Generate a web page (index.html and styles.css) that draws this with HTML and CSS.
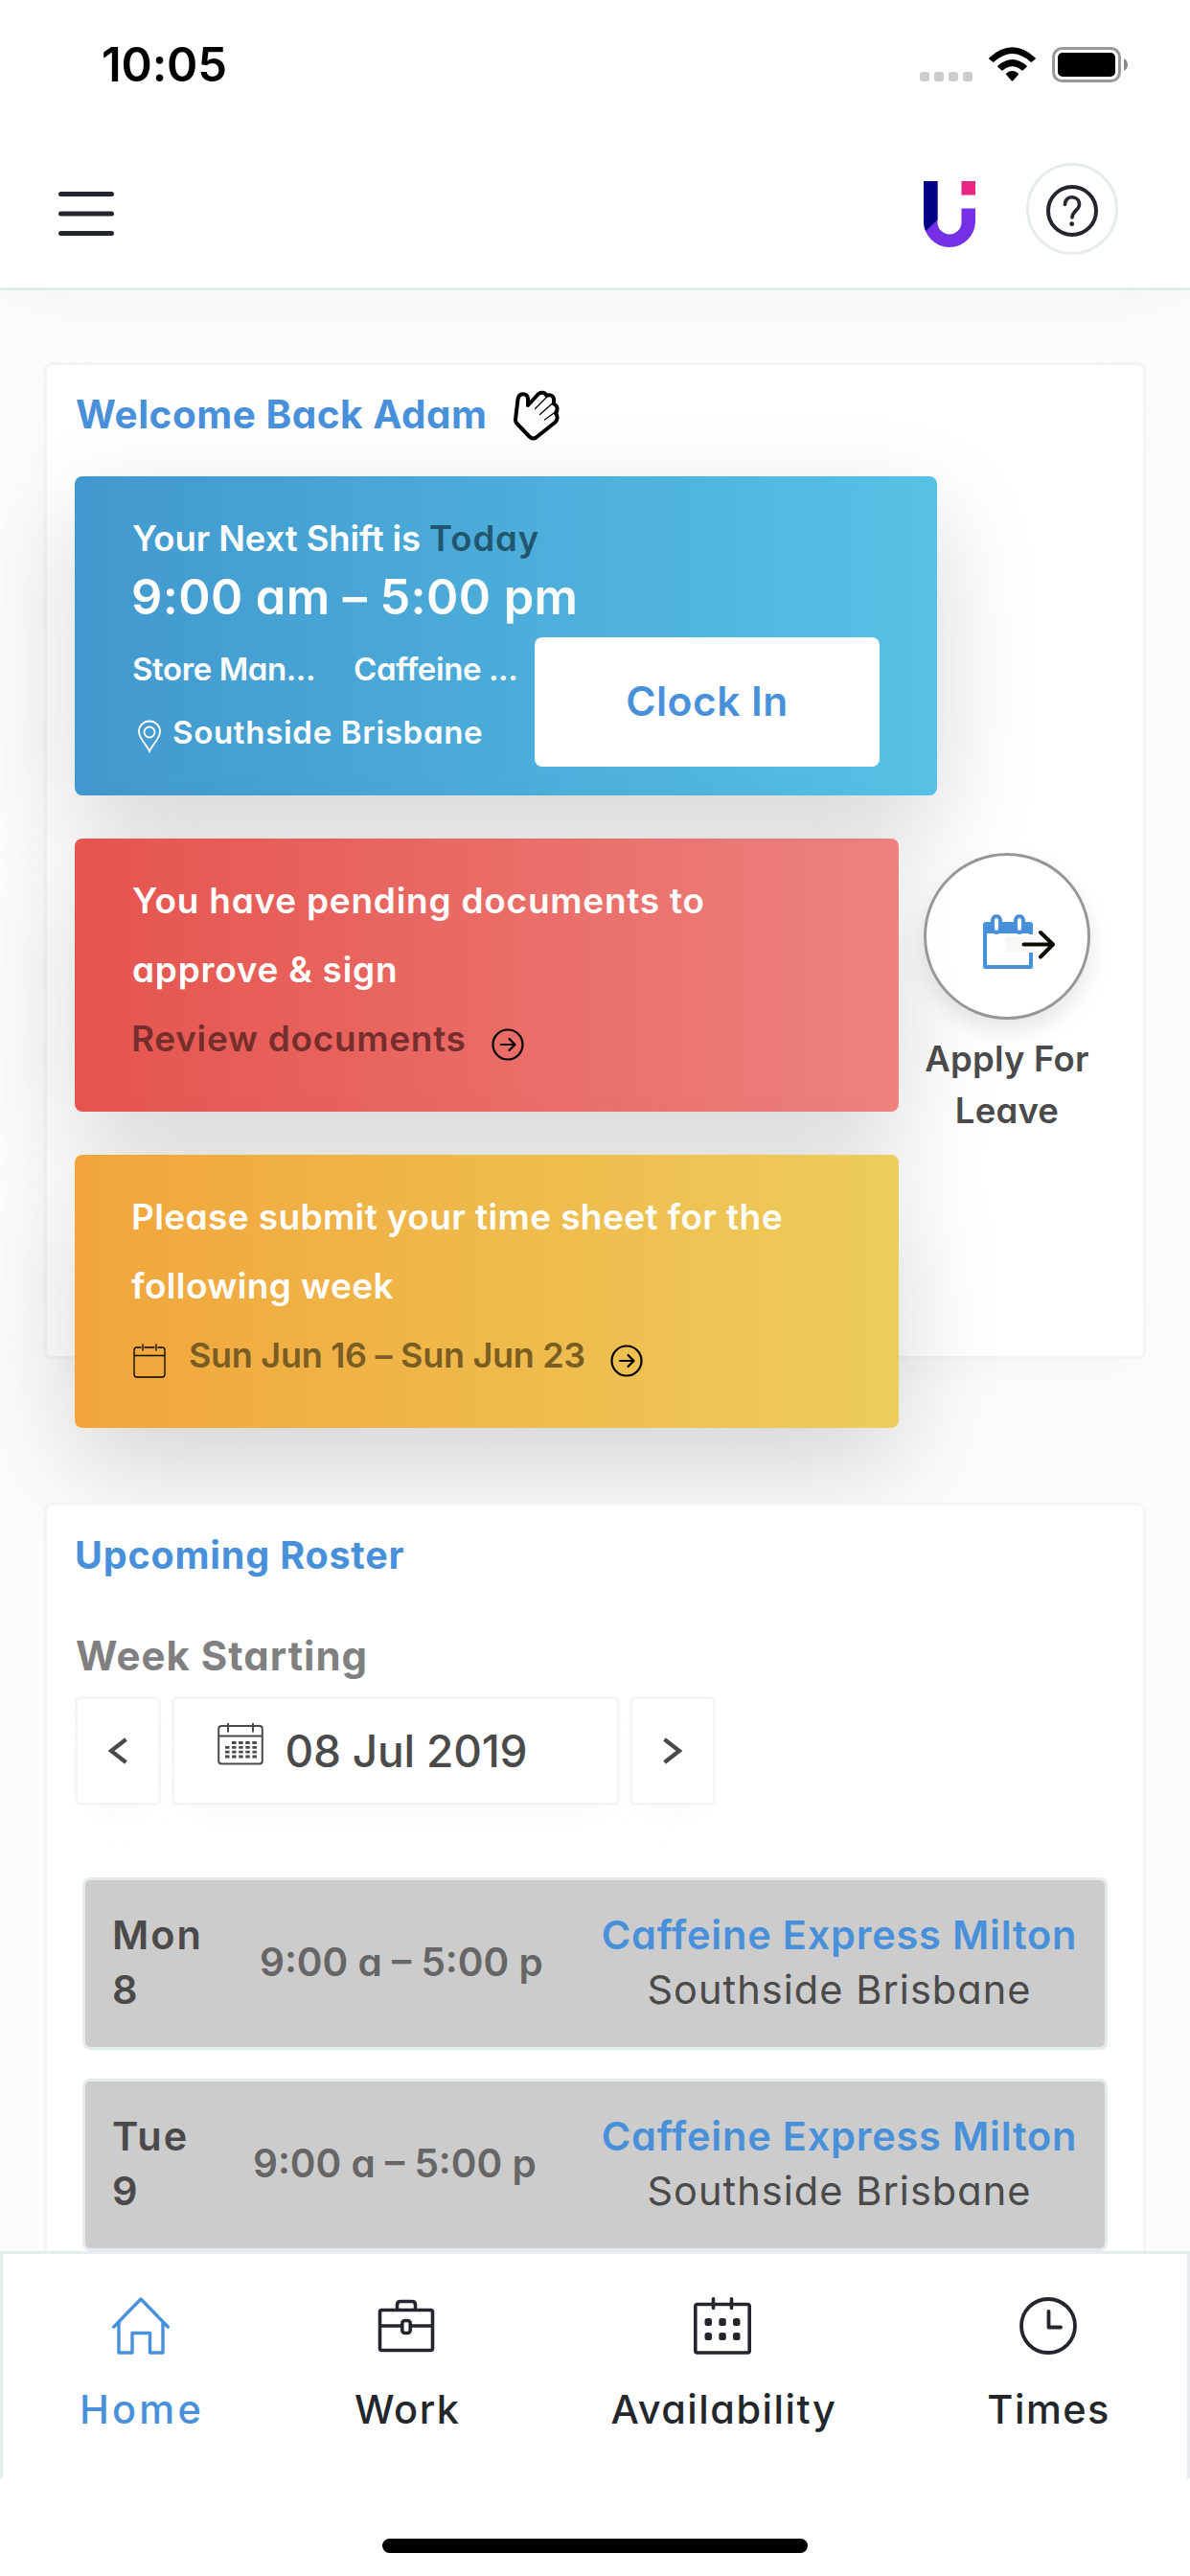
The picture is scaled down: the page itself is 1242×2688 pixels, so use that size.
FILE: index.html
```html
<!DOCTYPE html>
<html lang="en">
<head>
<meta charset="utf-8">
<title>Home</title>
<link rel="stylesheet" href="styles.css">
</head>
<body>
<div class="screen">
  <header class="header">
    <div class="status">
      <span class="status-time">10:05</span>
      <svg class="status-icons" width="218" height="40" viewBox="0 0 218 40">
        <g fill="#ccc"><rect x="0" y="27" width="10" height="10" rx="3"/><rect x="15" y="27" width="10" height="10" rx="3"/><rect x="30" y="27" width="10" height="10" rx="3"/><rect x="45" y="27" width="10" height="10" rx="3"/></g>
        <path d="M72.500 12.200Q96.500 -9.500 120.500 12.200Q121.300 13 120.500 13.800L117 16.600Q116.300 17.200 115.500 16.500Q96.500 -.5 77.500 16.500Q76.700 17.200 76 16.600L72.500 13.800Q71.700 13 72.500 12.200ZM81.500 20.500Q96.500 7.500 111.500 20.500Q112.300 21.300 111.500 22L107.800 25.300Q107 26 106.300 25.300Q96.500 17.200 86.700 25.300Q86 26 85.200 25.300L81.500 22Q80.700 21.300 81.500 20.500ZM90.300 28.500Q96.500 23.600 102.700 28.500Q103.500 29.300 102.700 30.100L97.300 36.200Q96.500 37 95.700 36.200L90.300 30.100Q89.500 29.300 90.300 28.500Z" fill="#000"/>
        <rect x="139.500" y="2.500" width="69" height="34" rx="9" fill="none" stroke="#999" stroke-width="3"/>
        <rect x="144" y="7" width="60" height="25" rx="5" fill="#000"/>
        <path d="M213 13Q217 15.500 217 19.500T213 26Z" fill="#888"/>
      </svg>
    </div>
    <div class="toolbar">
      <svg width="58" height="46" viewBox="0 0 58 46" stroke="#23272c" stroke-width="5" stroke-linecap="round"><path d="M2.500 2.500h53M2.500 23h53M2.500 43.500h53"/></svg>
      <div class="toolbar-right">
        <svg width="54" height="70" viewBox="0 0 54 70">
          <path d="M0 0H14.500V43A12.500 12.500 0 0 0 39.500 43V28.500H54V42A27 27 0 0 1 0 42Z" fill="#7530e6"/>
          <path d="M0 0H14.500V40.500L2.200 52Q0 48 0 42Z" fill="#040086"/>
          <rect x="39.500" width="14.500" height="14.500" fill="#e82582"/>
        </svg>
        <div class="help">
          <svg width="54" height="54" viewBox="0 0 54 54" fill="none" stroke="#23272c" stroke-width="4" stroke-linecap="round"><circle cx="27" cy="27" r="25"/><path d="M19.500 20.500C19.500 10 34.500 10.500 34.500 20.500C34.500 26 27 27.500 27 34" stroke-width="3.600"/><circle cx="26.700" cy="40.700" r="2.400" fill="#23272c" stroke="none"/></svg>
        </div>
      </div>
    </div>
  </header>

  <main class="content">
    <section class="panel panel-welcome">
      <h1 class="title title-welcome">Welcome Back Adam
        <svg width="48" height="53" viewBox="0 0 48 53" fill="none" stroke="#000" stroke-linecap="round" stroke-linejoin="round"><path d="M2 31L4.500 9.500C5.500 2.500 14.500 2.500 15 9V16L25.500 4.500C28.500 1.500 33 2.500 34.500 6C38 4 42.500 6 42 11V14.500C46 16 46.500 20.500 44 24V24.500C46.500 27 46 31.500 43 34L23.500 49.500Q20 52 16.500 48.500L3.500 35Q2 33.500 2 31Z" stroke-width="4"/><path d="M15 14.500L13.500 17L18 13Z" fill="#000" stroke="none"/><path d="M34 8L22.500 19.500M41.500 13L27.500 25.500M43.500 23L32.500 31" stroke-width="1.300"/></svg>
      </h1>

      <article class="card card-shift">
        <p class="shift-lead">Your Next Shift is <span class="shift-day">Today</span></p>
        <p class="shift-hours">9:00 am – 5:00 pm</p>
        <div class="shift-row">
          <div class="shift-info">
            <p class="shift-roles"><span class="role">Store Man...</span><span class="site">Caffeine ...</span></p>
            <p class="shift-place"><svg width="26" height="35" viewBox="0 0 26 35" fill="none" stroke="#fff" stroke-width="1.800"><path d="M13 33C11 27 2 20 2 12.500A11 11 0 0 1 24 12.500C24 20 15 27 13 33Z"/><circle cx="13" cy="13" r="5.500"/></svg><span>Southside Brisbane</span></p>
          </div>
          <button class="clock-in">Clock In</button>
        </div>
      </article>

      <div class="tasks">
        <div class="task-list">
          <article class="card card-task card-documents">
            <p class="task-text documents-text">You have pending documents to approve &amp; sign</p>
            <p class="task-link"><span class="documents-link">Review documents</span>
              <svg width="34" height="34" viewBox="0 0 34 34" fill="none" stroke="#000" stroke-width="2.200" stroke-linecap="round" stroke-linejoin="round"><circle cx="17" cy="17" r="15.500"/><path d="M10 17h14M18.500 11l6 6-6 6"/></svg></p>
          </article>
          <article class="card card-task card-timesheet">
            <p class="task-text timesheet-text">Please submit your time sheet for the following week</p>
            <p class="task-link">
              <svg class="task-calendar" width="34" height="36" viewBox="0 0 34 36" fill="none" stroke="#000" stroke-width="1.300" stroke-linecap="round"><path d="M8 4H4Q1 4 1 7V32Q1 35 4 35H30Q33 35 33 32V7Q33 4 30 4H26M12 4H22M1 12.500H33M10 1V7M24 1V7"/></svg>
              <span class="timesheet-link">Sun Jun 16 – Sun Jun 23</span>
              <svg width="34" height="34" viewBox="0 0 34 34" fill="none" stroke="#000" stroke-width="2.200" stroke-linecap="round" stroke-linejoin="round"><circle cx="17" cy="17" r="15.500"/><path d="M10 17h14M18.500 11l6 6-6 6"/></svg></p>
          </article>
        </div>
        <a class="leave">
          <span class="leave-circle">
            <svg width="76" height="60" viewBox="0 0 76 60"><path d="M2 53V13H50V22M50 41V56H2V50" fill="none" stroke="#4990db" stroke-width="4" stroke-linejoin="round"/><path d="M0 21V12Q0 9 3 9H49Q52 9 52 12V21Z" fill="#4990db"/><g fill="#fff" stroke="#4990db" stroke-width="4"><rect x="10" y="3" width="8" height="17" rx="4"/><rect x="34" y="3" width="8" height="17" rx="4"/></g><path d="M6 18H22V21H6ZM30 18H46V21H30Z" fill="#4990db"/><path d="M23 24H53V41H23Z" fill="#f8f8f8"/><path d="M42.500 32.500H73M60 20L73 32.500L60 45.500" fill="none" stroke="#0d0c04" stroke-width="4" stroke-linecap="round" stroke-linejoin="round"/></svg>
          </span>
          <span class="leave-label">Apply For Leave</span>
        </a>
      </div>
    </section>

    <section class="panel panel-roster">
      <h2 class="title title-roster">Upcoming Roster</h2>
      <h3 class="week-label">Week Starting</h3>
      <div class="week-picker">
        <button class="box step"><svg width="22" height="28" viewBox="0 0 22 28" fill="none" stroke="#4a4a4a" stroke-width="4.200"><path d="M19.500 2L4 14L19.500 26"/></svg></button>
        <div class="box date">
          <svg width="48" height="44" viewBox="0 0 48 44" fill="none" stroke="#4a4a4a" stroke-width="2"><rect x="1.200" y="3" width="45.600" height="39.500" rx="3"/><path d="M1 13.500H47M11 0V9.500M37 0V9.500"/><path d="M15 20.500H41M8 25.300H41M8 30.200H41M8 35H41" stroke-width="2.800" stroke-dasharray="4.500 2.600"/></svg>
          <span>08 Jul 2019</span>
        </div>
        <button class="box step"><svg width="22" height="28" viewBox="0 0 22 28" fill="none" stroke="#4a4a4a" stroke-width="4.200"><path d="M2.500 2L18 14L2.500 26"/></svg></button>
      </div>
      <div class="shifts">
        <article class="shift">
          <div class="day day-mon">Mon<br>8</div>
          <div class="hours">9:00 a – 5:00 p</div>
          <div class="venue"><strong>Caffeine Express Milton</strong><span>Southside Brisbane</span></div>
        </article>
        <article class="shift">
          <div class="day day-tue">Tue<br>9</div>
          <div class="hours">9:00 a – 5:00 p</div>
          <div class="venue"><strong>Caffeine Express Milton</strong><span>Southside Brisbane</span></div>
        </article>
      </div>
    </section>
  </main>

  <footer class="footer">
    <nav class="tabs">
      <a class="tab tab-home">
        <svg width="60" height="60" viewBox="0 0 60 60" fill="none" stroke="#4990db" stroke-width="3.400" stroke-linecap="round" stroke-linejoin="round"><path d="M1.800 31L30 2L58.200 31M7 26V58H21V37.500H39.500V58H53V26"/></svg>
        <span>Home</span></a>
      <a class="tab tab-work">
        <svg width="60" height="60" viewBox="0 0 60 60" fill="none" stroke="#23272c" stroke-width="3.600" stroke-linejoin="round"><rect x="2.500" y="13.500" width="55" height="42" rx="2"/><path d="M20.500 13V8Q20.500 4.500 24 4.500H36Q39.500 4.500 39.500 8V13M2.500 30H25.500M34.500 30H57.500"/><rect x="25.800" y="24.500" width="8.400" height="13" rx="3"/></svg>
        <span>Work</span></a>
      <a class="tab tab-availability">
        <svg width="60" height="60" viewBox="0 0 60 60" fill="none" stroke="#23272c" stroke-width="3.600" stroke-linecap="round"><rect x="1.800" y="7.500" width="56.400" height="50.500" rx="2"/><path d="M20.500 1.800V11.500M39.500 1.800V11.500"/><g fill="#23272c" stroke="none"><rect x="11.500" y="22" width="7.500" height="8" rx="2.500"/><rect x="26.300" y="22" width="7.500" height="8" rx="2.500"/><rect x="41" y="22" width="7.500" height="8" rx="2.500"/><rect x="11.500" y="37" width="7.500" height="8" rx="2.500"/><rect x="26.300" y="37" width="7.500" height="8" rx="2.500"/><rect x="41" y="37" width="7.500" height="8" rx="2.500"/></g></svg>
        <span>Availability</span></a>
      <a class="tab tab-times">
        <svg width="60" height="60" viewBox="0 0 60 60" fill="none" stroke="#23272c" stroke-width="3.800" stroke-linecap="round" stroke-linejoin="round"><circle cx="30" cy="30" r="28"/><path d="M30.500 15V31.500H43"/></svg>
        <span>Times</span></a>
    </nav>
    <div class="home-indicator"></div>
  </footer>
</div>
</body>
</html>
```
FILE: styles.css
```css
* { box-sizing: border-box; margin: 0; padding: 0; }
body { background: #fcfcfc; font-family: Inter, "Open Sans", sans-serif; font-feature-settings: "cv11"; color: #4a4a4a; }
svg { display: block; flex: none; }
button { font: inherit; color: inherit; border: 0; }

.screen { width: 1242px; height: 2688px; display: flex; flex-direction: column; overflow: hidden; }

.header { flex: none; height: 303px; position: relative; background: #fff; border-bottom: 3px solid #e4ebed; box-shadow: 0 18px 50px -12px rgba(205, 228, 220, .25); }
.status { display: flex; justify-content: space-between; padding: 38px 64px 0 106px; height: 136px; }
.status-time { font-size: 49px; line-height: 60px; font-weight: 600; letter-spacing: -.2px; color: #000; }
.status-icons { margin-top: 10px; }
.toolbar { display: flex; justify-content: space-between; align-items: center; height: 164px; padding: 0 75px 0 61px; }
.toolbar > svg { margin-top: 9px; }
.toolbar-right { display: flex; align-items: center; gap: 53px; }
.toolbar-right > svg { margin-top: 12px; }
.help { width: 96px; height: 96px; border: 3px solid #e6ecee; border-radius: 50%; display: flex; align-items: center; justify-content: center; padding-top: 4px; }

.content { flex: 1; min-height: 0; overflow: hidden; padding: 75px 46px 0; }
.panel { border: 3px solid #f3f4f4; border-radius: 8px; background: #fff; padding: 25px 29px 0; width: 1150px; }
.panel-welcome { height: 1040px; box-shadow: 0 20px 50px -20px rgba(205, 228, 220, .35); }
.title { display: flex; align-items: center; line-height: 54px; font-weight: 700; color: #4990db; white-space: nowrap; }
.title-welcome { padding-left: 1px; font-size: 40.500px; letter-spacing: .5px; gap: 27px; margin-bottom: 37px; }
.title-roster { font-size: 39.500px; letter-spacing: .8px; }

.card { border-radius: 8px; padding-left: 61px; box-shadow: 0 40px 110px rgba(0, 0, 0, .16); color: #fff; font-weight: 600; white-space: nowrap; }
.card-shift { width: 900px; height: 333px; padding-top: 38px; background: linear-gradient(90deg, #4298ce, #56c1e5); }
.shift-lead { margin-left: -1px; font-size: 36.500px; line-height: 54px; letter-spacing: -.1px; }
.shift-day { color: #22566f; letter-spacing: .9px; }
.shift-hours { margin: 4px 0 12px -2px; font-size: 50.500px; line-height: 60px; letter-spacing: .4px; }
.shift-row { display: flex; }
.shift-info { width: 419px; padding-top: 9px; font-size: 33px; line-height: 48px; }
.shift-roles { display: flex; margin-bottom: 18px; }
.role { width: 231px; letter-spacing: -.4px; margin-left: -1px; }
.site { letter-spacing: -.4px; }
.shift-place { display: flex; align-items: center; gap: 11px; padding-left: 4px; letter-spacing: .7px; }
.shift-place svg { margin-top: 9px; }
.clock-in { width: 360px; height: 135px; padding-bottom: 2px; border-radius: 8px; background: #fff; color: #4990db; font-size: 42.500px; font-weight: 600; letter-spacing: .5px; }

.tasks { display: flex; margin-top: 45px; }
.task-list { display: flex; flex-direction: column; gap: 45px; }
.card-task { width: 860px; height: 285px; padding-top: 29px; font-size: 37px; line-height: 72px; }
.card-documents { background: linear-gradient(90deg, #e6544e, #ed827e); }
.card-timesheet { background: linear-gradient(90deg, #f1a53c, #edcd5b); }
.task-text { width: 710px; white-space: normal; }
.documents-text { margin-left: -1px; letter-spacing: .75px; }
.timesheet-text { margin-left: -2px; letter-spacing: .38px; }
.task-link { display: flex; align-items: center; }
.task-link svg { margin-top: 11px; }
.documents-link { color: #752e2c; letter-spacing: .68px; margin: 0 26px 0 -2px; }
.timesheet-link { color: #7a5d22; font-size: 36px; letter-spacing: -.3px; margin: 0 26px 0 24px; }

.leave { width: 226px; padding-top: 15px; display: flex; flex-direction: column; align-items: center; }
.leave-circle { width: 174px; height: 174px; border: 3px solid #979797; border-radius: 50%; background: rgba(255, 255, 255, .85); box-shadow: 0 12px 24px rgba(0, 0, 0, .1); display: flex; align-items: center; justify-content: center; padding: 11px 0 0 26px; }
.leave-label { width: 190px; margin-top: 14px; font-size: 36.500px; line-height: 54px; font-weight: 600; letter-spacing: .2px; text-align: center; }

.panel-roster { margin-top: 150px; height: 1000px; position: relative; }
.week-label { margin: 50px 0 14px 1px; font-size: 42px; line-height: 56px; font-weight: 700; letter-spacing: 1px; color: #808080; }
.week-picker { display: flex; gap: 10.500px; }
.box { height: 114px; border: 3px solid #f3f5f6; border-radius: 6px; background: #fff; box-shadow: 0 22px 34px -18px rgba(205, 228, 220, .22); display: flex; align-items: center; }
.step { width: 90px; justify-content: center; }
.date { width: 468px; padding-left: 45px; gap: 23px; font-size: 46px; font-weight: 500; letter-spacing: -.2px; }
.date svg { margin-top: -14px; }
.shifts { margin: 75px 0 0 8px; display: flex; flex-direction: column; gap: 30px; width: 1070px; }
.shift { height: 180px; border: 3px solid #e6ecee; border-radius: 8px; background: #ccc; padding: 29px 0 0 28px; display: flex; font-size: 41.500px; line-height: 57px; white-space: nowrap; }
.day { font-weight: 600; letter-spacing: 2px; }
.day-mon { width: 154px; }
.day-tue { width: 147px; }
.hours { padding-top: 28px; font-size: 40.500px; font-weight: 600; letter-spacing: 0; color: #666; }
.venue { display: flex; flex-direction: column; align-items: center; width: 500px; margin-left: auto; margin-right: 27px; }
.venue strong { font-weight: 600; letter-spacing: .8px; color: #4990db; }
.venue span { font-weight: 400; letter-spacing: 1.05px; }

.footer { flex: none; height: 339px; background: #fff; position: relative; }
.tabs { height: 237px; border: solid #e6ecee; border-width: 3px 3px 0; padding: 45px 80px 0 80px; display: flex; justify-content: space-between; align-items: flex-start; }
.tab { display: flex; flex-direction: column; align-items: center; gap: 32px; font-size: 41.500px; line-height: 50px; font-weight: 500; color: #23272c; letter-spacing: 1.500px; }
.tab-home { color: #4990db; letter-spacing: 3.200px; }
.tab svg { margin-right: 2px; }
.home-indicator { width: 444px; height: 15px; margin: 63px auto 0; border-radius: 8px; background: #000; }
```
